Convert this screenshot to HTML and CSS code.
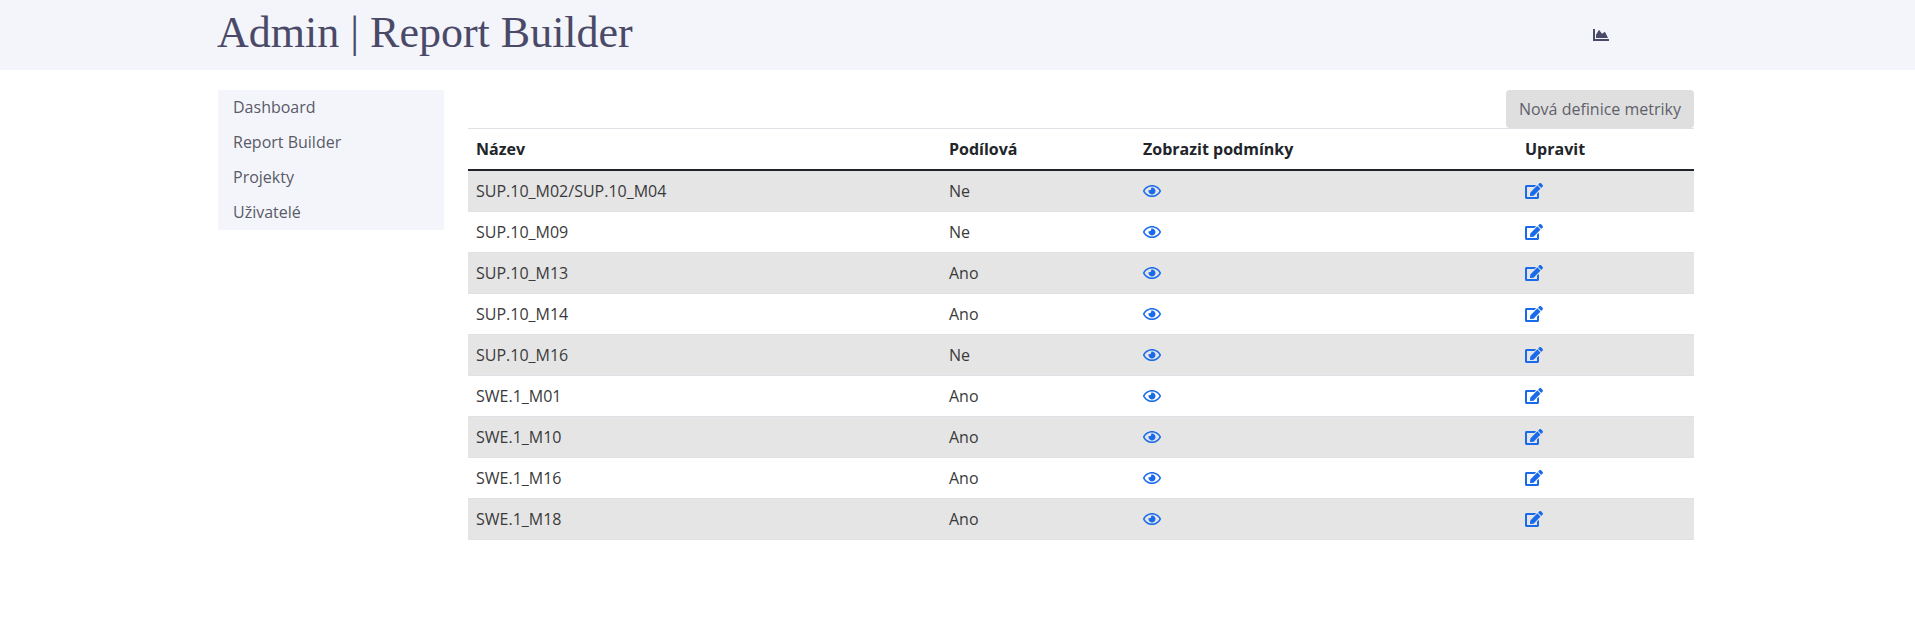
FILE: index.html
```html
<!DOCTYPE html>
<html lang="en">
<head>
    <meta charset="UTF-8">
    <title>Admin | Report Builder</title>
    <link rel="stylesheet" href="styles.css">
</head>
<body>
    <svg class="sprites" width="0" height="0">
        <defs>
            <symbol id="eye" viewBox="0 0 576 512">
                <path d="M288 144a110.94 110.94 0 0 0-31.24 5 55.4 55.4 0 0 1 7.24 27 56 56 0 0 1-56 56 55.4 55.4 0 0 1-27-7.24A111.71 111.71 0 1 0 288 144zm284.52 97.4C518.29 135.59 410.93 64 288 64S57.68 135.64 3.48 241.41a32.35 32.35 0 0 0 0 29.19C57.71 376.41 165.07 448 288 448s230.32-71.64 284.52-177.41a32.35 32.35 0 0 0 0-29.19zM288 400c-98.65 0-189.09-55-237.93-144C98.91 167 189.34 112 288 112s189.09 55 237.93 144C477.1 345 386.66 400 288 400z"/>
            </symbol>
            <symbol id="edit" viewBox="0 0 576 512">
                <path d="M402.6 83.2l90.2 90.2c3.8 3.8 3.8 10 0 13.8L274.4 405.6l-92.8 10.3c-12.4 1.4-22.9-9.1-21.5-21.5l10.3-92.8L388.8 83.2c3.8-3.8 10-3.8 13.8 0zm162-22.9l-48.8-48.8c-15.2-15.2-39.9-15.2-55.2 0l-35.4 35.4c-3.8 3.8-3.8 10 0 13.8l90.2 90.2c3.8 3.8 10 3.8 13.8 0l35.4-35.4c15.2-15.3 15.2-40 0-55.2zM384 346.2V448H64V128h229.8c3.2 0 6.2-1.3 8.5-3.5l40-40c7.6-7.6 2.2-20.5-8.5-20.5H48C21.5 64 0 85.5 0 112v352c0 26.5 21.5 48 48 48h352c26.5 0 48-21.5 48-48V306.2c0-10.7-12.9-16-20.5-8.5l-40 40c-2.2 2.3-3.5 5.3-3.5 8.5z"/>
            </symbol>
        </defs>
    </svg>

    <header class="top-bar">
        <h1 class="page-title">Admin | Report Builder</h1>
        <a class="chart-link" href="#">
            <svg class="chart-icon" viewBox="0 0 512 512"><path d="M500 384c6.6 0 12 5.4 12 12v40c0 6.6-5.4 12-12 12H12c-6.6 0-12-5.4-12-12V76c0-6.6 5.4-12 12-12h40c6.6 0 12 5.4 12 12v308h436zM372.7 159.5L288 216l-85.3-113.7c-5.1-6.8-15.5-6.3-19.9 1L96 248v104h384l-89.9-187.8c-3.2-6.5-11.4-8.7-17.4-4.7z"/></svg>
        </a>
    </header>

    <div class="layout">
        <nav class="side-nav">
            <a href="#">Dashboard</a>
            <a href="#">Report Builder</a>
            <a href="#">Projekty</a>
            <a href="#">Uživatelé</a>
        </nav>

        <main class="content">
            <div class="toolbar">
                <button class="btn-new" type="button">Nová definice metriky</button>
            </div>
            <table class="metrics">
                <colgroup>
                    <col class="col-name">
                    <col class="col-share">
                    <col class="col-view">
                    <col class="col-edit">
                </colgroup>
                <thead>
                    <tr><th>Název</th><th>Podílová</th><th>Zobrazit podmínky</th><th>Upravit</th></tr>
                </thead>
                <tbody>
                    <tr><td>SUP.10_M02/SUP.10_M04</td><td>Ne</td><td><svg class="icon"><use href="#eye"/></svg></td><td><svg class="icon"><use href="#edit"/></svg></td></tr>
                    <tr><td>SUP.10_M09</td><td>Ne</td><td><svg class="icon"><use href="#eye"/></svg></td><td><svg class="icon"><use href="#edit"/></svg></td></tr>
                    <tr><td>SUP.10_M13</td><td>Ano</td><td><svg class="icon"><use href="#eye"/></svg></td><td><svg class="icon"><use href="#edit"/></svg></td></tr>
                    <tr><td>SUP.10_M14</td><td>Ano</td><td><svg class="icon"><use href="#eye"/></svg></td><td><svg class="icon"><use href="#edit"/></svg></td></tr>
                    <tr><td>SUP.10_M16</td><td>Ne</td><td><svg class="icon"><use href="#eye"/></svg></td><td><svg class="icon"><use href="#edit"/></svg></td></tr>
                    <tr><td>SWE.1_M01</td><td>Ano</td><td><svg class="icon"><use href="#eye"/></svg></td><td><svg class="icon"><use href="#edit"/></svg></td></tr>
                    <tr><td>SWE.1_M10</td><td>Ano</td><td><svg class="icon"><use href="#eye"/></svg></td><td><svg class="icon"><use href="#edit"/></svg></td></tr>
                    <tr><td>SWE.1_M16</td><td>Ano</td><td><svg class="icon"><use href="#eye"/></svg></td><td><svg class="icon"><use href="#edit"/></svg></td></tr>
                    <tr><td>SWE.1_M18</td><td>Ano</td><td><svg class="icon"><use href="#eye"/></svg></td><td><svg class="icon"><use href="#edit"/></svg></td></tr>
                </tbody>
            </table>
        </main>
    </div>
</body>
</html>
```

FILE: styles.css
```css
body {
    margin: 0;
    background-color: #fff;
    color: #212529;
    font-family: "Open Sans", sans-serif;
    font-size: 16px;
    line-height: 24px;
}

.sprites {
    display: block;
    height: 0;
}

.top-bar {
    display: flex;
    justify-content: space-between;
    align-items: center;
    height: 70px;
    padding: 0 88px 0 217px;
    background-color: #f4f5fa;
    color: #4a4a68;
}

.page-title {
    margin: 0 0 4px;
    font-family: "Liberation Serif", serif;
    font-size: 44px;
    font-weight: 400;
    line-height: 66px;
}

.chart-link {
    display: flex;
    width: 234px;
    color: #4a4a68;
}

.chart-icon {
    width: 16px;
    height: 16px;
    fill: currentColor;
}

.layout {
    display: flex;
    gap: 24px;
    padding: 20px 221px 0 218px;
}

.side-nav {
    display: flex;
    flex-direction: column;
    flex: 0 0 226px;
    align-self: flex-start;
    background-color: #f4f5fa;
}

.side-nav a {
    height: 35px;
    padding: 0 15px;
    color: #5a5a68;
    line-height: 35px;
    text-decoration: none;
}

.content {
    flex: 1;
}

.toolbar {
    display: flex;
    justify-content: flex-end;
}

.btn-new {
    height: 38px;
    padding: 0 13px;
    border: 0;
    border-radius: 4px;
    background-color: #dfdfdf;
    color: #5f5f6b;
    font: inherit;
}

.metrics {
    width: 100%;
    table-layout: fixed;
    border-collapse: collapse;
}

.col-name { width: 473px; }
.col-share { width: 194px; }
.col-view { width: 382px; }

.metrics thead tr {
    border-top: 1px solid #dee2e6;
    border-bottom: 2px solid #212529;
}

.metrics th {
    height: 40px;
    padding: 0 8px;
    font-weight: 700;
    text-align: left;
}

.metrics td {
    height: 40px;
    padding: 0 8px;
    color: #3a3a3a;
}

.metrics tbody tr {
    border-bottom: 1px solid #dee2e6;
}

.metrics tbody tr:nth-child(odd) {
    background-color: #e5e5e5;
}

.icon {
    display: block;
    width: 18px;
    height: 16px;
    fill: #1a6bec;
}
```
